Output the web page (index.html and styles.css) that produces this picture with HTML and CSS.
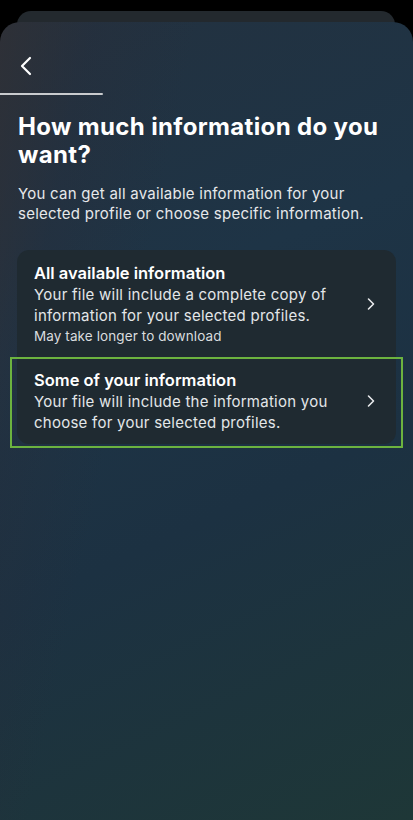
FILE: index.html
```html
<!DOCTYPE html>
<html lang="en">
<head>
<meta charset="utf-8">
<title>How much information do you want?</title>
<link rel="stylesheet" href="styles.css">
</head>
<body>
<div class="screen">
  <div class="backcard"></div>
  <div class="sheet">
    <div class="topbar">
      <button class="back" aria-label="Back">
        <svg width="14" height="20" viewBox="0 0 14 20"><path d="M11 2 L3 10 L11 18" fill="none" stroke="#ffffff" stroke-width="2.2" stroke-linecap="round" stroke-linejoin="round"/></svg>
      </button>
    </div>
    <div class="progress"><div class="progress-fill"></div></div>
    <h1 class="title">How much information do you want?</h1>
    <p class="subtitle">You can get all available information for your selected profile or choose specific information.</p>
    <div class="options">
      <div class="option">
        <div class="option-text">
          <div class="option-title">All available information</div>
          <div class="option-body">Your file will include a complete copy of information for your selected profiles.</div>
          <div class="option-note">May take longer to download</div>
        </div>
        <svg class="chev" width="10" height="14" viewBox="0 0 10 14"><path d="M2.5 2 L7.5 7 L2.5 12" fill="none" stroke="#e8eaec" stroke-width="1.6" stroke-linecap="round" stroke-linejoin="round"/></svg>
      </div>
      <div class="option option-selected">
        <div class="option-text">
          <div class="option-title">Some of your information</div>
          <div class="option-body">Your file will include the information you choose for your selected profiles.</div>
        </div>
        <svg class="chev" width="10" height="14" viewBox="0 0 10 14"><path d="M2.5 2 L7.5 7 L2.5 12" fill="none" stroke="#e8eaec" stroke-width="1.6" stroke-linecap="round" stroke-linejoin="round"/></svg>
      </div>
    </div>
  </div>
</div>
</body>
</html>
```
FILE: styles.css
```css
* { box-sizing: border-box; }
html, body { margin: 0; padding: 0; background: #000; }
body {
  font-family: Inter, "Noto Sans", "Liberation Sans", sans-serif;
  color: #f2f4f5;
}
.screen {
  width: 413px;
  height: 820px;
  padding-top: 11px;
  display: flex;
  flex-direction: column;
  overflow: hidden;
}
.backcard {
  height: 20px;
  margin: 0 18px 0 17px;
  border-radius: 14px 14px 0 0;
  background: #23292e;
  flex: none;
}
.sheet {
  margin-top: -9px;
  flex: 1;
  border-radius: 20px 20px 0 0;
  background:
    linear-gradient(102deg, rgba(50,48,52,0.75) 0%, rgba(42,44,56,0.3) 16%, rgba(30,50,68,0) 34%),
    linear-gradient(155deg, #23313f 0%, #1e3446 35%, #1c3142 60%, #1e3737 100%);
  display: flex;
  flex-direction: column;
}
.topbar {
  height: 71px;
  display: flex;
  align-items: center;
  padding: 0 0 0 19px;
}
.back {
  background: none;
  border: 0;
  padding: 0;
  width: 14px;
  height: 20px;
  display: flex;
  margin-top: 17px;
}
.progress {
  height: 2px;
  width: 103px;
}
.progress-fill {
  height: 100%;
  background: #c9cbce;
  border-radius: 0 1px 1px 0;
}
.title {
  margin: 18px 14px 0 18px;
  font-size: 24px;
  line-height: 28px;
  font-weight: 700;
  letter-spacing: 0.35px;
  color: #ffffff;
}
.subtitle {
  margin: 15px 18px 0 18px;
  font-size: 15px;
  line-height: 20px;
  letter-spacing: 0.25px;
  color: #e6e8ea;
}
.options {
  margin: 26px 17px 0 17px;
  background: #1f2a31;
  border-radius: 12px;
  display: flex;
  flex-direction: column;
}
.option {
  display: flex;
  align-items: center;
  padding: 12px 20px 11px 17px;
  position: relative;
}
.option-text { flex: 1; }
.option-title {
  font-size: 16.5px;
  line-height: 22px;
  font-weight: 600;
  color: #ffffff;
}
.option-body {
  font-size: 15px;
  line-height: 21px;
  letter-spacing: 0.25px;
  color: #e3e6e8;
}
.option-note {
  font-size: 13.5px;
  line-height: 20px;
  letter-spacing: 0.1px;
  color: #d9dcdf;
}
.chev { flex: none; margin-left: 18px; }
.option-selected::after {
  content: "";
  position: absolute;
  left: -7px;
  right: -7px;
  top: 0;
  bottom: -4px;
  border: 2.5px solid #6cb33f;
}
```
